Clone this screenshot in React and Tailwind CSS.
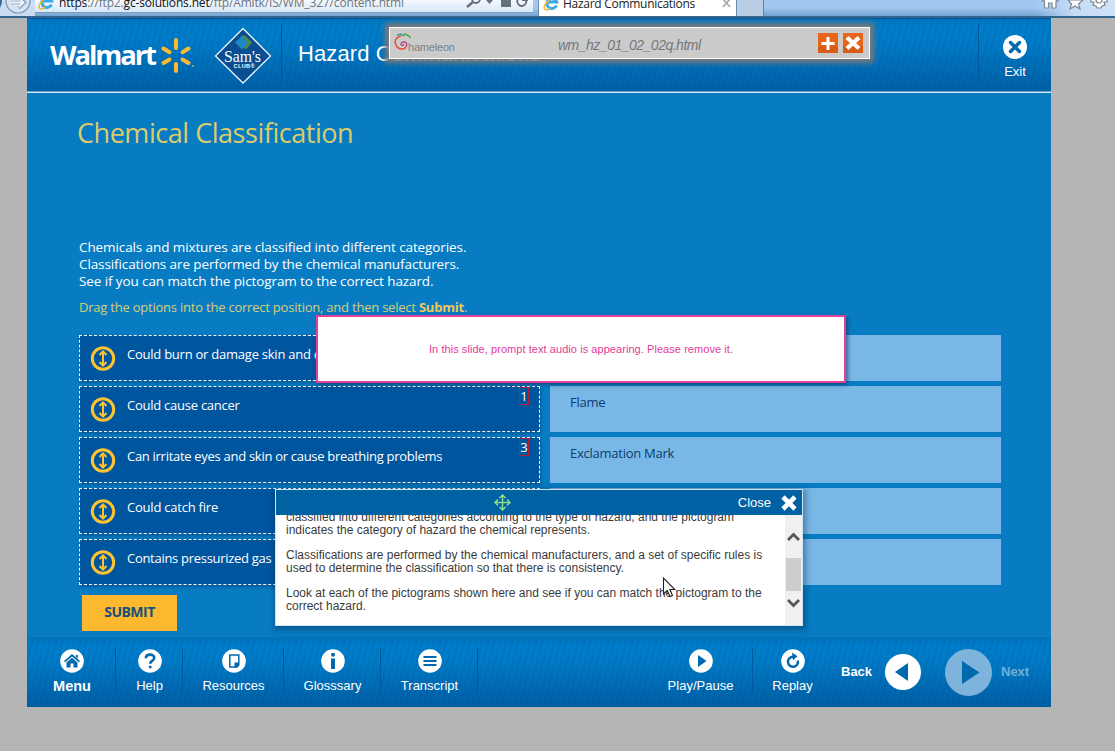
import React from 'react';

const HUM = "font-['Open_Sans','Noto_Sans',sans-serif]";

const options = [
  { text: 'Could burn or damage skin and eyes', track: 'tracking-[-0.24px]', num: '5', target: '' },
  { text: 'Could cause cancer', track: 'tracking-[-0.25px]', num: '1', target: 'Flame' },
  { text: 'Can irritate eyes and skin or cause breathing problems', track: 'tracking-[-0.29px]', num: '3', target: 'Exclamation Mark' },
  { text: 'Could catch fire', track: 'tracking-[-0.22px]', num: '2', target: '' },
  { text: 'Contains pressurized gas', track: 'tracking-[-0.29px]', num: '4', target: '' },
];

function IELogo({ className }) {
  return (
    <svg className={className} width="17" height="17" viewBox="0 0 17 17" fill="none">
      <path d="M13.5 11.5A5 5 0 1 1 13.7 8H4.5" stroke="#3ba9e6" strokeWidth="3" />
      <path d="M2 15.5C-1 13 6 3 14.5 1.5" stroke="#f4b92c" strokeWidth="1.6" />
      <path d="M2 15.5c1.500 1 4-.5 5-1.500" stroke="#f4b92c" strokeWidth="1.500" />
    </svg>
  );
}

function Chrome() {
  return (
    <div className={`flex h-[18px] w-full shrink-0 overflow-hidden border-b-2 border-[#33658f] bg-gradient-to-b from-[#a2c8ef] via-[#a0c6ee] to-[#74a3d0] ${HUM}`}>
      <div className="flex h-[18px] w-[35px] shrink-0 bg-[#c8dcf4]">
        <svg width="35" height="17" viewBox="0 0 35 17" fill="none">
          <path d="M0 0h2v3L0 8z" fill="#3b6f9c" />
          <circle cx="18" cy="1" r="12" fill="#d5e4f5" stroke="#8498ae" strokeWidth="1.200" />
          <path d="M11 2.500h13M18.500-3l6 5.500-6 5.500" stroke="#8fa3ba" strokeWidth="3.600" />
          <path d="M11 2.500h12M18.500-2l5 4.500-5 4.500" stroke="#eef5fc" strokeWidth="2" />
        </svg>
      </div>
      <div className="flex h-[13px] w-[498px] shrink-0 border-b border-[#7e9dbd] bg-gradient-to-b from-[#f4f9fe] to-[#d7e7f8]">
        <IELogo className="-mt-[7px] ml-[3px] shrink-0" />
        <div className="-mt-[5px] ml-[4px] w-[405px] whitespace-nowrap text-[12px] leading-[16px] tracking-[-0.16px] text-[#6d747c]">
          <span className="text-[#111]">https</span>://ftp2.<span className="text-[#111]">gc-solutions.net</span>/ftp/Amitk/IS/WM_327/content.html
        </div>
        <svg className="shrink-0" width="66" height="13" viewBox="0 0 66 13" fill="none">
          <circle cx="12" cy="-1" r="4" stroke="#66707b" strokeWidth="1.800" />
          <path d="M9 2L3 7" stroke="#66707b" strokeWidth="2.400" />
          <path d="M22 0h7l-3.500 4z" fill="#66707b" />
          <rect x="37" y="-2" width="10" height="9" fill="#66707b" />
          <path d="M61.500-1A4.500 4.500 0 1 1 58-3M58 0h5v-4" stroke="#66707b" strokeWidth="1.800" />
        </svg>
      </div>
      <div className="ml-[5px] flex h-[16px] w-[199px] shrink-0 border-x border-[#6c8fb2] bg-white">
        <IELogo className="-mt-[6px] ml-[4px] shrink-0" />
        <div className="-mt-[5px] ml-[3px] w-[159px] whitespace-nowrap text-[12px] leading-[17px] tracking-[-0.28px] text-[#222]">Hazard Communications</div>
        <svg width="10" height="10" viewBox="0 0 10 10"><path d="M1-1l7 8M8-1L1 7" stroke="#aaa" strokeWidth="1.800" /></svg>
      </div>
      <div className="h-[16px] w-[27px] shrink-0 border-r border-[#5f84a8] bg-[#b9cde4]" />
      <div className="flex-1" />
      <div className="h-[16px] w-[80px] bg-gradient-to-r from-[#a9ccf1]/0 via-[#c5dcf6] to-[#cfe2f8]">
        <svg width="80" height="16" viewBox="0 0 80 16" fill="#fff" stroke="#7c8794" strokeWidth="1.200">
          <path d="M7.500 1L15-6l8 7h-2v7h-4V3h-3.500v5h-4V1z" />
          <path d="M33 0h15l-4.500 4 1.500 5-5-3-5 3 1.500-5z" />
          <path d="M56-1h16v3h-3l1 3-3 1-1 2h-4l-1-2-3-1 1-3h-3z" />
          <circle cx="64" cy="0" r="3" />
        </svg>
      </div>
    </div>
  );
}

function Stripes({ id }) {
  return (
    <svg className="absolute inset-0 h-full w-full">
      <defs>
        <linearGradient id={`${id}g`} x1="0" y1="0" x2="0" y2="1">
          <stop offset="0" stopColor="#0074bb" />
          <stop offset=".12" stopColor="#007dca" />
          <stop offset=".35" stopColor="#007ac5" />
          <stop offset="1" stopColor="#005ea4" />
        </linearGradient>
        <pattern id={`${id}p`} width="6" height="24" patternUnits="userSpaceOnUse">
          <path d="M6 0L0 24M12 0L6 24M0 0L-6 24" stroke="#00457f" strokeOpacity=".17" strokeWidth="1.500" />
        </pattern>
      </defs>
      <rect width="100%" height="100%" fill={`url(#${id}g)`} />
      <rect width="100%" height="100%" fill={`url(#${id}p)`} />
    </svg>
  );
}

function Spark() {
  return (
    <svg className="ml-[4px] mt-[18px] shrink-0" width="34" height="38" viewBox="0 0 34 38" fill="none">
      <g stroke="#fbb831" strokeWidth="4" strokeLinecap="round">
        <path d="M16 3v8M16 27v7M28.500 11.500l-6 3.700M3.500 11.500l6 3.700M28.500 26l-6-3.500M3.500 26l6-3.500" />
      </g>
      <circle cx="33" cy="29" r="1" fill="#9ab95d" />
    </svg>
  );
}

function SamsClub() {
  return (
    <svg className="ml-[20px] mt-[8px] shrink-0" width="58" height="58" viewBox="0 0 58 58">
      <path d="M29 1.500L56.500 29 29 56 1.500 29z" fill="#0a4d91" stroke="#e8f2fa" strokeWidth="1.300" />
      <path d="M28 8.500l7 7-7 7-7-7z" fill="#1f87c2" />
      <path d="M29 8.500h2l7 7-6 7-2-2 4-5-6-6z" fill="#4d8a4b" />
      <text x="28.500" y="35" textAnchor="middle" fontFamily="Liberation Serif, serif" fontSize="17" textLength="37" lengthAdjust="spacingAndGlyphs" fill="#fff">Sam's</text>
      <text x="30" y="40.500" textAnchor="middle" fontFamily="Liberation Sans, sans-serif" fontWeight="bold" fontSize="5.500" textLength="21" fill="#fff">CLUB®</text>
    </svg>
  );
}

function Header() {
  return (
    <div className="relative h-[75px] shrink-0 overflow-hidden">
      <Stripes id="h" />
      <div className="relative flex h-[73px] border-t border-[#00579b]">
        <div className="ml-[23px] mt-[17px] w-[106px] whitespace-nowrap font-['Open_Sans',sans-serif] text-[27.5px] font-bold leading-[38px] tracking-[-2.1px] text-white">Walmart</div>
        <Spark />
        <SamsClub />
        <div className="ml-[9px] mt-[5px] h-[58px] w-px bg-[#00559b]" />
        <div className="ml-[16px] mt-[21px] w-[260px] whitespace-nowrap text-[22px] leading-[28px] tracking-[0.1px] text-white">Hazard Communications</div>
        <div className="ml-auto mt-[5px] h-[58px] w-px bg-[#00559b]" />
        <div className="flex w-[72px] flex-col items-center pt-[16px] text-white">
          <svg width="24" height="24" viewBox="0 0 24 24"><circle cx="12" cy="12" r="12" fill="#fff" /><path d="M7.500 7.500l9 9M16.500 7.500l-9 9" stroke="#0068ad" strokeWidth="3.400" strokeLinecap="round" /></svg>
          <div className="mt-[5px] text-[13px] leading-[16px]">Exit</div>
        </div>
      </div>
      <div className="relative h-[2px] border-b border-[#d9ecf8] bg-[#5d9fce]" />
    </div>
  );
}

function DragIcon() {
  return (
    <svg className="ml-[10px] mt-[9px] shrink-0" width="26" height="26" viewBox="0 0 26 26" fill="none">
      <circle cx="13" cy="13.500" r="10.700" stroke="#fdc330" strokeWidth="3" />
      <path d="M13 7.500v12M9.500 10L13 6.500l3.500 3.500M9.500 17L13 20.500l3.500-3.500" stroke="#fdc330" strokeWidth="2" />
    </svg>
  );
}

function Body() {
  return (
    <div className={`flex h-[544px] flex-col bg-[#077cc3] ${HUM}`}>
      <div className="ml-[50px] mt-[22px] whitespace-nowrap text-[27px] leading-[36px] tracking-[-0.46px] text-[#ddcb6b]">Chemical Classification</div>
      <div className="ml-[52px] mt-[88px] whitespace-nowrap text-[13.5px] leading-[17px] tracking-[-0.1px] text-white">
        <div>Chemicals and mixtures are classified into different categories.</div>
        <div>Classifications are performed by the chemical manufacturers.</div>
        <div>See if you can match the pictogram to the correct hazard.</div>
      </div>
      <div className="ml-[52px] mt-[9px] whitespace-nowrap text-[13px] leading-[17px] tracking-[-0.22px] text-[#d8cc76]">Drag the options into the correct position, and then select <b className="text-[#eec75a]">Submit</b>.</div>
      <div className="ml-[52px] mt-[19px] flex flex-col gap-[5px]">
        {options.map((o) => (
          <div key={o.num} className="flex h-[46px] gap-[10px]">
            <div className="flex w-[461px] border border-dashed border-white bg-[#00559f] shadow-[1px_2px_3px_rgba(0,50,100,0.45)]">
              <DragIcon />
              <div className={`ml-[11px] mt-[9px] whitespace-nowrap text-[13px] leading-[18px] text-white ${o.track}`}>{o.text}</div>
              <div className="ml-auto mr-[10px] flex h-[18px] w-[10px] shrink-0 items-center justify-center border border-[#b3203c] text-[13px] leading-[16px] text-white">{o.num}</div>
            </div>
            <div className="w-[451px] bg-[#79b7e7] pl-[20px] pt-[7px] text-[13px] leading-[18px] tracking-[-0.25px] text-[#0b3d6d]">{o.target}</div>
          </div>
        ))}
      </div>
      <div className="ml-[55px] mt-[10px] h-[36px] w-[95px] bg-[#fcb82f] text-center text-[14px] font-bold leading-[34px] tracking-[-0.5px] text-[#174f7d]">SUBMIT</div>
    </div>
  );
}

const glyphs = {
  Menu: <g fill="#0068ad"><path d="M12 5l8 7-1.200 1.300L12 7.500l-6.800 5.800L4 12z" /><path d="M12 8.800l5.500 4.700V18.500h-4v-4h-3v4h-4v-5zM15.800 6h2v3.500l-2-1.700z" /></g>,
  Help: <path d="M7.800 9.300C8 4.300 16.500 4.500 16.200 9c-.2 3-4 2.700-4 5.700M12.200 16.700v2.600" stroke="#0068ad" strokeWidth="2.600" fill="none" />,
  Resources: <g><path d="M7.800 6h9v12h-9z" fill="#fff" stroke="#0068ad" strokeWidth="1.500" /><path d="M12.500 13.500H17v5h-4.500z" fill="#0068ad" /><path d="M14.500 19.500l3.500-3.500v3.500z" fill="#fff" /></g>,
  Glosssary: <g fill="#0068ad"><circle cx="12" cy="5.800" r="2" /><path d="M10 9.500h4V20h-4z" /></g>,
  Transcript: <path d="M5.500 8h13M5.500 12h13M5.500 16h13" stroke="#0068ad" strokeWidth="2" />,
  'Play/Pause': <path d="M9 6l8.500 6L9 18z" fill="#0068ad" />,
  Replay: <g><path d="M16.800 11.500A5 5 0 1 1 12 7.800" fill="none" stroke="#0068ad" strokeWidth="2.400" /><path d="M11 3.500l5.500 3.700-4.500 4z" fill="#0068ad" /></g>,
};

function NavItem({ name, className, bold }) {
  return (
    <div className={`flex flex-col items-center pt-[11px] text-white ${className}`}>
      <svg className="shrink-0" width="24" height="24" viewBox="0 0 24 24"><circle cx="12" cy="12" r="11.800" fill="#fff" />{glyphs[name]}</svg>
      <div className={bold ? 'mt-[5px] whitespace-nowrap text-[14.5px] font-bold leading-[16px]' : 'mt-[5px] whitespace-nowrap text-[13px] leading-[16px]'}>{name}</div>
    </div>
  );
}

function Divider() {
  return <div className="mt-[10px] h-[46px] w-px bg-[#00599f]" />;
}

function Footer() {
  return (
    <div className="relative h-[70px] shrink-0 overflow-hidden border-t border-[#0a6fb0]">
      <Stripes id="f" />
      <div className="relative flex h-full">
        <NavItem name="Menu" bold className="w-[88px] pl-[2px]" />
        <Divider />
        <NavItem name="Help" className="w-[66px] pl-[1px]" />
        <Divider />
        <NavItem name="Resources" className="w-[100px] pl-[1px]" />
        <Divider />
        <NavItem name="Glosssary" className="w-[96px] pl-[1px]" />
        <Divider />
        <NavItem name="Transcript" className="w-[96px] pl-[1px]" />
        <Divider />
        <NavItem name="Play/Pause" className="ml-[171px] w-[103px]" />
        <Divider />
        <NavItem name="Replay" className="w-[79px]" />
        <div className="ml-[9px] mt-[26px] w-[44px] text-[13px] font-bold leading-[16px] text-white">Back</div>
        <svg className="mt-[16px] shrink-0" width="36" height="36" viewBox="0 0 36 36"><circle cx="18" cy="18" r="18" fill="#fff" /><path d="M23 9v18L10 18z" fill="#0068ad" /></svg>
        <svg className="ml-[24px] mt-[11px] shrink-0" width="47" height="47" viewBox="0 0 47 47"><circle cx="23.500" cy="23.500" r="23.500" fill="#7eb3db" /><path d="M17 12v23l17.500-11.500z" fill="#0068ad" /></svg>
        <div className="ml-[9px] mt-[26px] text-[13px] font-bold leading-[16px] text-[#73add8]">Next</div>
      </div>
    </div>
  );
}

function FloatingBar() {
  return (
    <div className="absolute left-[389px] top-[27px] flex h-[32px] w-[481px] border border-white bg-[#cbcbcb] shadow-[0_0_5px_4px_#77797a]">
      <svg className="ml-[4px] mt-[4px] shrink-0" width="20" height="22" viewBox="0 0 20 22" fill="none">
        <path d="M7 4C2 5 0 9 2 13c2 5 8 5 10 2" stroke="#ed4c32" strokeWidth="1.500" />
        <path d="M12 15c3-5-4-7-5-3-.3 2 3 2 2.500 0" stroke="#b83478" strokeWidth="1.200" />
        <path d="M3 3l4-1 2 2" stroke="#2ba0a4" strokeWidth="1.500" />
        <path d="M9 4l2-2 4 2 1.500 2" stroke="#48a947" strokeWidth="1.500" />
      </svg>
      <div className="-ml-[6px] mt-[12px] w-[119px] text-[11px] leading-[14px] tracking-[-0.2px] text-[#7c8189]">hameleon</div>
      <div className="ml-[31px] mt-[8px] w-[259px] whitespace-nowrap text-[14px] italic leading-[18px] tracking-[-0.5px] text-[#74787c]">wm_hz_01_02_02q.html</div>
      <svg className="ml-[1px] mt-[5px] shrink-0" width="46" height="21" viewBox="0 0 46 21" fill="none">
        <rect width="20" height="20" fill="#e8661b" /><rect x="25" width="20" height="20" fill="#e8661b" />
        <path d="M0 13h20v7H0zM25 13h20v7H25z" fill="#c74f12" fillOpacity=".5" />
        <path d="M10 4v13M3.500 10.500h13" stroke="#fff" strokeWidth="3" />
        <path d="M29 4.500l12 11M41 4.500l-12 11" stroke="#fff" strokeWidth="4.200" />
      </svg>
    </div>
  );
}

function Transcript() {
  return (
    <div className="absolute left-[275px] top-[489px] flex h-[137px] w-[528px] flex-col border border-[#cfe3f2] bg-white shadow-[1px_2px_6px_2px_rgba(10,40,70,0.4)]">
      <div className="flex h-[25px] shrink-0 bg-[#0062a3]">
        <svg className="ml-[218px] mt-[4px] shrink-0" width="17" height="17" viewBox="0 0 17 17" fill="none" stroke="#8ddc8d" strokeWidth="1.500">
          <path d="M8.500 1v15M1 8.500h15M5.500 4l3-3 3 3M5.500 13l3 3 3-3M4 5.500l-3 3 3 3M13 5.500l3 3-3 3" />
        </svg>
        <div className="ml-auto mt-[4px] text-[13px] leading-[17px] text-white">Close</div>
        <svg className="ml-[9px] mr-[4px] mt-[4px] shrink-0" width="18" height="18" viewBox="0 0 18 18"><path d="M3 3l12 12M15 3L3 15" stroke="#fff" strokeWidth="4.600" /></svg>
      </div>
      <div className="flex min-h-0 flex-1 overflow-hidden">
        <div className="-mt-[4px] w-[509px] whitespace-nowrap pl-[10px] text-[12px] leading-[13px] text-[#3b3b3b]">
          <p>classified into different categories according to the type of hazard, and the pictogram<br />indicates the category of hazard the chemical represents.</p>
          <p className="mt-[12px]">Classifications are performed by the chemical manufacturers, and a set of specific rules is<br />used to determine the classification so that there is consistency.</p>
          <p className="mt-[12px]">Look at each of the pictograms shown here and see if you can match the pictogram to the<br />correct hazard.</p>
        </div>
        <div className="flex w-[17px] flex-col items-center bg-[#f0f0f0]">
          <svg className="mt-[16px] shrink-0" width="13" height="11" viewBox="0 0 13 11"><path d="M1 9l5.500-5.500L12 9" fill="none" stroke="#555" strokeWidth="2.800" /></svg>
          <div className="mt-[16px] h-[33px] w-[15px] shrink-0 bg-[#cdcdcd]" />
          <svg className="mt-[7px] shrink-0" width="13" height="11" viewBox="0 0 13 11"><path d="M1 2l5.500 5.500L12 2" fill="none" stroke="#555" strokeWidth="2.800" /></svg>
        </div>
      </div>
    </div>
  );
}

export default function App() {
  return (
    <div className="relative flex h-[751px] w-[1115px] flex-col overflow-hidden bg-[#b5b5b5] font-['Liberation_Sans',Arial,sans-serif]">
      <Chrome />
      <div className="ml-[27px] flex h-[689px] w-[1024px] flex-col">
        <Header />
        <Body />
        <Footer />
      </div>
      <FloatingBar />
      <div className="absolute left-[316px] top-[315px] flex h-[68px] w-[530px] items-center justify-center border-2 border-[#e0409a] bg-white text-[11px] tracking-[0.06px] text-[#e5399a] shadow-[2px_2px_4px_rgba(20,50,90,0.6)]">In this slide, prompt text audio is appearing. Please remove it.</div>
      <Transcript />
      <svg className="absolute left-[662px] top-[577px]" width="14" height="22" viewBox="0 0 14 22"><path d="M1.500 1v16l3.700-3.500 2.800 6 2.500-1-2.700-6h5z" fill="#fff" stroke="#222" strokeWidth="1.100" /></svg>
    </div>
  );
}
